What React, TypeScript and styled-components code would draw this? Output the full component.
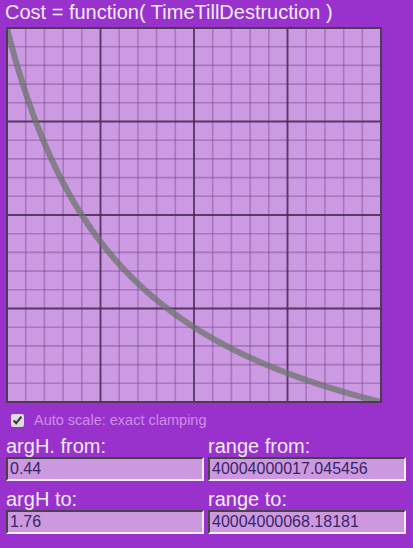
import styled, { createGlobalStyle } from 'styled-components';

const GlobalStyle = createGlobalStyle`
  html, body {
    margin: 0;
    padding: 0;
    background: #9932cc;
  }
  body {
    font-family: "Liberation Sans", Arial, sans-serif;
    width: 413px;
    height: 548px;
    overflow: hidden;
  }
`

const Page = styled.div`
  display: flex;
  flex-direction: column;
  padding: 0 7px 0 6px;
`

const Title = styled.h1`
  margin: 0;
  padding: 0;
  margin-left: -1px;
  font-size: 20px;
  font-weight: normal;
  line-height: 25px;
  color: #f3eaff;
  white-space: nowrap;
`

const ChartBox = styled.div`
  margin-top: 2px;
  width: 376px;
  height: 376px;
`

const CheckRow = styled.label`
  display: flex;
  align-items: center;
  gap: 10px;
  margin: 8px 0 0 5px;
  font-size: 14.5px;
  color: #cc8ee6;
  height: 18px;

  > input {
    margin: 0;
    width: 13px;
    height: 13px;
    accent-color: #dddddd;
  }
`

const Fields = styled.div`
  display: grid;
  grid-template-columns: 198px 198px;
  column-gap: 4px;
  margin-top: 6px;
`

const Field = styled.div`
  display: flex;
  flex-direction: column;
`

const FieldLabel = styled.span`
  font-size: 20px;
  line-height: 22px;
  color: #f3eaff;
`

const FieldInput = styled.input`
  box-sizing: border-box;
  width: 198px;
  height: 24px;
  margin: 0 0 7px 0;
  padding: 1px 2px;
  border: 2px inset #eeeeee;
  border-top-color: #999999;
  border-left-color: #999999;
  background: #cc99e0;
  color: #3a2466;
  font-family: "Liberation Sans", Arial, sans-serif;
  font-size: 16px;
`

const W = 374
const TMIN = 0.44
const TMAX = 1.76

function Chart() {
  const minor: number[] = []
  for (let i = 1; i < 20; i++) minor.push((W / 20) * i)
  const major = [1, 2, 3].map((i) => (W / 4) * i)

  // cost = 40004000000 + 30 / t, drawn normalised between its ends
  const vmax = 30 / TMIN
  const vmin = 30 / TMAX
  const pts: string[] = []
  for (let i = 0; i <= 200; i++) {
    const f = i / 200
    const t = TMIN + (TMAX - TMIN) * f
    const n = (30 / t - vmin) / (vmax - vmin)
    pts.push(`${(f * W).toFixed(2)},${((1 - n) * W).toFixed(2)}`)
  }

  return (
    <svg width={376} height={376} viewBox="-1 -1 376 376">
      <rect x={0} y={0} width={W} height={W} fill="#cc99e3" />
      {minor.map((p) => (
        <g key={p} stroke="rgba(90,50,110,0.33)" strokeWidth={1.6}>
          <line x1={p} y1={0} x2={p} y2={W} />
          <line x1={0} y1={p} x2={W} y2={p} />
        </g>
      ))}
      {major.map((p) => (
        <g key={p} stroke="rgba(70,40,80,0.8)" strokeWidth={1.8}>
          <line x1={p} y1={0} x2={p} y2={W} />
          <line x1={0} y1={p} x2={W} y2={p} />
        </g>
      ))}
      <polyline
        points={pts.join(' ')}
        fill="none"
        stroke="rgba(105,115,105,0.72)"
        strokeWidth={6}
      />
      <rect x={0} y={0} width={W} height={W} fill="none" stroke="#4f3a55" strokeWidth={2} />
    </svg>
  )
}

export default function App() {
  return (
    <Page>
      <GlobalStyle />
      <Title>Cost = function( TimeTillDestruction )</Title>
      <ChartBox>
        <Chart />
      </ChartBox>
      <CheckRow>
        <input type="checkbox" defaultChecked />
        Auto scale: exact clamping
      </CheckRow>
      <Fields>
        <Field>
          <FieldLabel>argH. from:</FieldLabel>
          <FieldInput defaultValue="0.44" />
        </Field>
        <Field>
          <FieldLabel>range from:</FieldLabel>
          <FieldInput defaultValue="40004000017.045456" />
        </Field>
        <Field>
          <FieldLabel>argH to:</FieldLabel>
          <FieldInput defaultValue="1.76" />
        </Field>
        <Field>
          <FieldLabel>range to:</FieldLabel>
          <FieldInput defaultValue="40004000068.18181" />
        </Field>
      </Fields>
    </Page>
  )
}
